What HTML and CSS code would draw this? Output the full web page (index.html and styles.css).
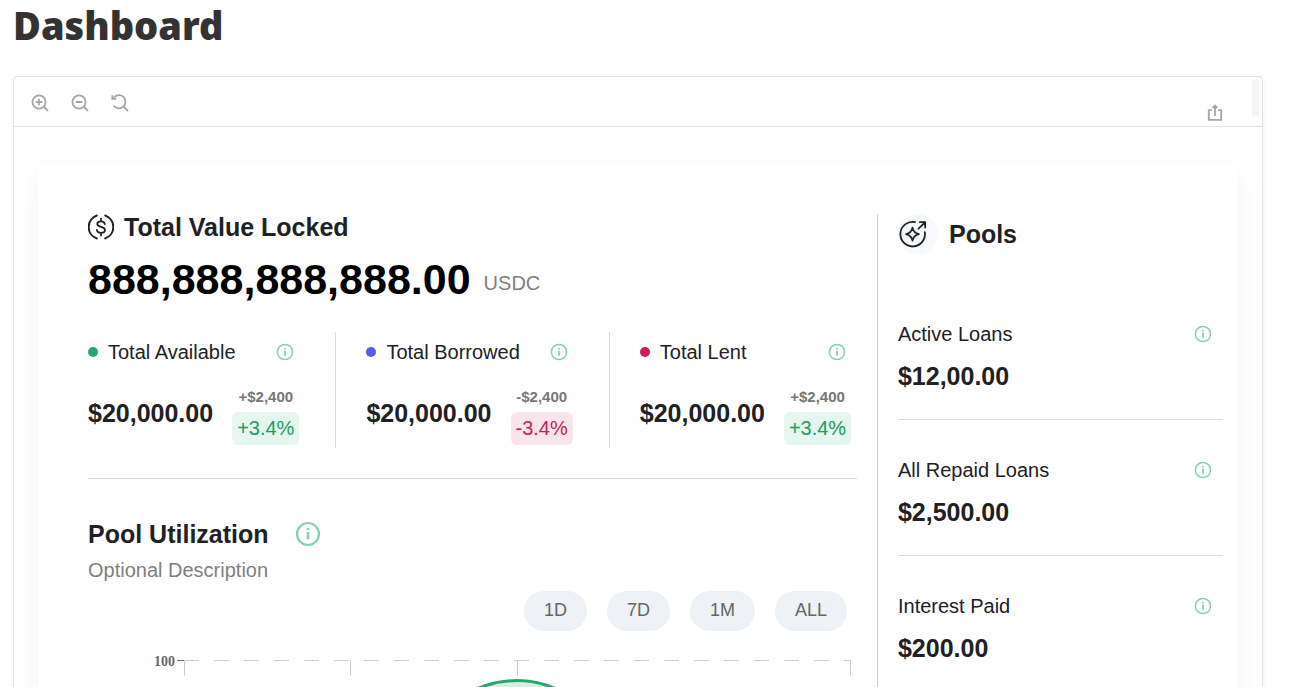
FILE: index.html
```html
<!DOCTYPE html>
<html lang="en">
<head>
<meta charset="utf-8">
<meta name="viewport" content="width=device-width, initial-scale=1">
<title>Dashboard</title>
<link rel="stylesheet" href="styles.css">
</head>
<body>
<svg width="0" height="0" class="symbols" aria-hidden="true">
  <symbol id="info" viewBox="0 0 18 18">
    <circle cx="9" cy="9" r="7.6" fill="none" stroke="currentColor" stroke-width="1.5"/>
    <path d="M9 7.7v5" stroke="currentColor" stroke-width="1.8"/>
    <path d="M9 4.9v1.5" stroke="currentColor" stroke-width="1.8"/>
  </symbol>
</svg>
<main class="page">
  <h1 class="page-title">Dashboard</h1>
  <section class="panel">
    <div class="toolbar">
      <div class="zoom-tools">
        <button class="tool" type="button" aria-label="Zoom in"><svg viewBox="0 0 18 18"><circle cx="8" cy="8" r="6.600"/><path d="M12.700 12.700L17 17M8 4.800v6.400M4.800 8h6.400"/></svg></button>
        <button class="tool" type="button" aria-label="Zoom out"><svg viewBox="0 0 18 18"><circle cx="8" cy="8" r="6.600"/><path d="M12.700 12.700L17 17M4.800 8h6.400"/></svg></button>
        <button class="tool" type="button" aria-label="Reset zoom"><svg viewBox="0 0 18 18"><path d="M2.600 3.800A6.600 6.600 0 1 1 2.600 11.800M12.700 12.700L17 17M1.300 1.200v3.600h3.900"/></svg></button>
      </div>
      <button class="tool share" type="button" aria-label="Share"><svg viewBox="0 0 18 18"><path d="M6 6.200H2.800v9.700h12.400V6.200H12M9 12V2M6.600 4L9 1.600l2.400 2.400"/></svg></button>
      <span class="scroll-thumb"></span>
    </div>
    <div class="canvas">
      <div class="card">
        <div class="overview">
          <h2 class="heading"><svg class="coin" viewBox="0 0 26 26"><path d="M8.800 1.500a12.200 12.200 0 0 0 0 23M17.200 1.500a12.200 12.200 0 0 1 0 23"/><path class="dollar" d="M16.800 10.100c-.2-1.700-1.600-2.800-3.800-2.800-2.200 0-3.700 1-3.700 2.700 0 3.900 7.700 1.900 7.700 6 0 1.800-1.600 2.800-4 2.800-2.300 0-3.900-1.100-4.100-2.900M13 4.600v2.400M13 19v2.400"/></svg>Total Value Locked</h2>
          <p class="total"><strong class="total-value">888,888,888,888.00</strong><span class="unit">USDC</span></p>
          <div class="stats">
            <section class="stat">
              <div class="stat-head"><span class="dot green"></span><h3 class="label">Total Available</h3><button class="info" type="button" aria-label="About total available"><svg><use href="#info"/></svg></button></div>
              <div class="stat-body"><strong class="amount">$20,000.00</strong><div class="change"><span class="delta">+$2,400</span><span class="badge up">+3.4%</span></div></div>
            </section>
            <section class="stat">
              <div class="stat-head"><span class="dot blue"></span><h3 class="label">Total Borrowed</h3><button class="info" type="button" aria-label="About total borrowed"><svg><use href="#info"/></svg></button></div>
              <div class="stat-body"><strong class="amount">$20,000.00</strong><div class="change"><span class="delta">-$2,400</span><span class="badge down">-3.4%</span></div></div>
            </section>
            <section class="stat">
              <div class="stat-head"><span class="dot red"></span><h3 class="label">Total Lent</h3><button class="info" type="button" aria-label="About total lent"><svg><use href="#info"/></svg></button></div>
              <div class="stat-body"><strong class="amount">$20,000.00</strong><div class="change"><span class="delta">+$2,400</span><span class="badge up">+3.4%</span></div></div>
            </section>
          </div>
          <section class="utilization">
            <div class="util-head"><h2 class="heading">Pool Utilization</h2><button class="info large" type="button" aria-label="About pool utilization"><svg><use href="#info"/></svg></button></div>
            <p class="description">Optional Description</p>
            <div class="ranges"><button class="range" type="button">1D</button><button class="range" type="button">7D</button><button class="range" type="button">1M</button><button class="range" type="button">ALL</button></div>
            <svg class="chart" viewBox="0 0 769 220" role="img" aria-label="Pool utilization chart">
              <path class="area" d="M300 120C340 70 375 30.500 429 30.500S508 70 548 120V220H300z"/>
              <path class="curve" d="M300 120C340 70 375 30.500 429 30.500S508 70 548 120"/>
              <g class="grid-lines"><path d="M96 10.500H763"/><path d="M96.500 10.500V220M262.500 10.500V220M429.500 10.500V220M762.500 10.500V220"/></g>
              <path class="tick" d="M89 10.500h7"/>
              <text class="axis" x="87" y="16" text-anchor="end">100</text>
            </svg>
          </section>
        </div>
        <aside class="pools">
          <h2 class="heading pools-title"><span class="pool-icon"><svg viewBox="0 0 30 30"><path d="M17 3.100A12.300 12.300 0 1 0 26.800 13.200"/><path d="M14.500 8.600Q15.600 14 20.900 15.100Q15.600 16.200 14.500 21.600Q13.400 16.200 8.100 15.100Q13.400 14 14.500 8.600z"/><path d="M20.500 9.700L27 3.300M21.800 3.100h5.400v5.400"/></svg></span>Pools</h2>
          <section class="pool">
            <div class="pool-head"><h3 class="label">Active Loans</h3><button class="info" type="button" aria-label="About active loans"><svg><use href="#info"/></svg></button></div>
            <strong class="amount">$12,00.00</strong>
          </section>
          <section class="pool">
            <div class="pool-head"><h3 class="label">All Repaid Loans</h3><button class="info" type="button" aria-label="About all repaid loans"><svg><use href="#info"/></svg></button></div>
            <strong class="amount">$2,500.00</strong>
          </section>
          <section class="pool">
            <div class="pool-head"><h3 class="label">Interest Paid</h3><button class="info" type="button" aria-label="About interest paid"><svg><use href="#info"/></svg></button></div>
            <strong class="amount">$200.00</strong>
          </section>
        </aside>
      </div>
    </div>
  </section>
</main>
</body>
</html>
```
FILE: styles.css
```css
* { box-sizing: border-box; }
body {
  margin: 0;
  background: #fff;
  color: #202124;
  font-family: "Liberation Sans", Arial, sans-serif;
}
h1, h2, h3, p { margin: 0; }
button {
  padding: 0;
  border: 0;
  background: none;
  color: inherit;
  font: inherit;
  cursor: pointer;
}
svg { display: block; }
.symbols { position: absolute; }
.page {
  display: flex;
  flex-direction: column;
  height: 100vh;
  padding: 0 27px 0 13px;
  overflow: hidden;
}
.page-title {
  height: 76px;
  flex: none;
  color: #333;
  font: 900 38px/50px "Noto Sans", sans-serif;
}
.panel {
  flex: 1;
  min-height: 0;
  overflow: hidden;
  border: 1px solid #e2e2e2;
  border-bottom: 0;
  border-radius: 5px 5px 0 0;
  box-shadow: 0 1px 4px rgba(0, 0, 0, .06);
}
.toolbar {
  position: relative;
  display: flex;
  justify-content: space-between;
  height: 50px;
  padding: 17px 38px 0 17px;
  border-bottom: 1px solid #e2e2e2;
}
.zoom-tools { display: flex; gap: 22px; align-items: flex-start; }
.tool svg {
  width: 18px;
  height: 18px;
  fill: none;
  stroke: #a6a6a6;
  stroke-width: 1.8;
}
.share { align-self: flex-end; margin-bottom: 4px; }
.scroll-thumb {
  position: absolute;
  top: 3px;
  right: 3px;
  width: 7px;
  height: 37px;
  border-radius: 3px;
  background: #f4f4f4;
}
.canvas { padding: 36px 25px 36px 24px; }
.card {
  display: grid;
  grid-template-columns: 20fr 9fr;
  gap: 20px;
  padding: 51px 14px 50px 50px;
  border-radius: 10px;
  background: #fff;
  box-shadow: 0 10px 30px rgba(0, 0, 0, .06);
}
.heading {
  display: flex;
  align-items: center;
  font-size: 25px;
  line-height: 26px;
}
.coin {
  width: 26px;
  height: 26px;
  margin-right: 10px;
  fill: none;
  stroke: #202124;
  stroke-width: 2;
  stroke-linecap: round;
}
.dollar { stroke-width: 1.8; }
.total {
  display: flex;
  align-items: center;
  gap: 13px;
  margin-top: 14px;
}
.total-value { color: #000; font-size: 43px; line-height: 50px; }
.unit { padding-top: 8px; color: #808080; font-size: 20px; line-height: 24px; }
.stats {
  display: flex;
  padding-bottom: 30px;
  margin-top: 28px;
  border-bottom: 1px solid #dcdcdc;
}
.stat { height: 116px; padding: 8px 36px 0 30px; border-right: 1px solid #dcdcdc; }
.stat:first-child { padding-left: 0; }
.stat:last-child { padding-right: 0; border-right: 0; }
.stat-head { display: flex; align-items: center; height: 24px; padding-right: 5px; }
.dot { width: 10px; height: 10px; margin-right: 10px; border-radius: 50%; }
.green { background: #27a56a; }
.blue { background: #5b5bea; }
.red { background: #d01c4f; }
.label { font-size: 20px; font-weight: 400; line-height: 24px; }
.info { color: #84d0b1; }
.info svg { width: 18px; height: 18px; }
.stat-head .info { margin-left: auto; }
.stat-body { display: flex; align-items: flex-start; gap: 19px; margin-top: 24px; }
.amount { font-size: 25px; line-height: 30px; }
.stat-body .amount { margin-top: 10px; }
.change { display: flex; flex-direction: column; align-items: center; gap: 6px; }
.delta { color: #777; font-size: 15px; font-weight: 700; line-height: 18px; }
.badge { padding: 0 5px; border-radius: 6px; font-size: 20px; line-height: 33px; }
.up { background: #e4f6ee; color: #219a62; }
.down { background: #fbe4eb; color: #c02650; }
.utilization { margin-top: 42px; }
.util-head { display: flex; align-items: center; gap: 26px; }
.info.large svg { width: 26px; height: 26px; }
.description { margin-top: 11px; color: #808080; font-size: 20px; line-height: 24px; }
.ranges { display: flex; justify-content: flex-end; gap: 20px; margin-top: 9px; padding-right: 10px; }
.range {
  height: 40px;
  padding: 0 20px 2px;
  border-radius: 20px;
  background: #eef1f5;
  color: #666;
  font-size: 18px;
}
.chart { width: 100%; margin-top: 19px; }
.area { fill: #d2efe2; }
.curve { fill: none; stroke: #27a56a; stroke-width: 3; }
.grid-lines { fill: none; stroke: #ccc; stroke-dasharray: 15 15; }
.tick { stroke: #666; }
.axis { fill: #666; font: 700 14px "Liberation Serif", serif; }
.pools { padding-left: 20px; border-left: 1px solid #ccc; }
.pools-title { gap: 11px; }
.pool-icon {
  display: flex;
  align-items: center;
  width: 40px;
  height: 40px;
  border-radius: 50%;
  background: #f8f9fc;
}
.pool-icon svg {
  width: 30px;
  height: 30px;
  fill: none;
  stroke: #202124;
  stroke-width: 1.8;
  stroke-linecap: round;
  stroke-linejoin: round;
}
.pool { padding: 38px 0 28px; border-bottom: 1px solid #dcdcdc; }
.pools-title + .pool { margin-top: 30px; }
.pool-head { display: flex; align-items: center; justify-content: space-between; padding-right: 11px; margin-bottom: 15px; }
```
